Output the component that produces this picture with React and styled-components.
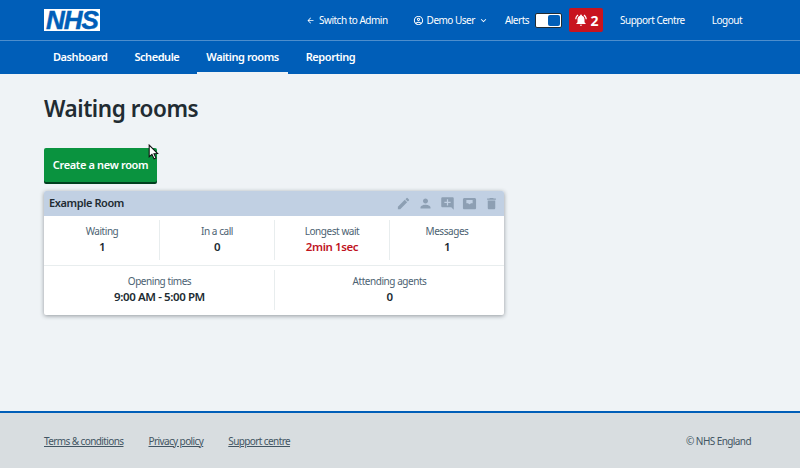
import React from 'react';
import styled, {createGlobalStyle} from 'styled-components';
import {
  MdArrowBack,
  MdOutlineAccountCircle,
  MdKeyboardArrowDown,
  MdNotificationsActive,
  MdEdit,
  MdPerson,
  MdAddComment,
  MdDelete
} from 'react-icons/md';

const GlobalStyle = createGlobalStyle`
  html, body {
    margin: 0;
    padding: 0;
    height: 100%;
    overflow: hidden;
  }
  body {
    font-family: 'Noto Sans', 'Open Sans', sans-serif;
    background: #eff3f6;
    color: #212b32;
  }
  #root {
    height: 100%;
  }
`;

const Page = styled.div`
  position: relative;
  display: flex;
  flex-direction: column;
  width: 800px;
  height: 468px;
`;

const Header = styled.header`
  background: #005eb8;
  color: #fff;
`;

const TopBar = styled.div`
  display: flex;
  align-items: center;
  justify-content: space-between;
  height: 40px;
  padding: 0 58px 0 44px;
  border-bottom: 1px solid #4d8ecd;
`;

const Logo = styled.div`
  display: flex;
  align-items: center;
  justify-content: center;
  width: 56px;
  height: 22px;
  background: #fff;
  color: #005eb8;
  font-family: 'Liberation Sans', sans-serif;
  font-size: 26px;
  font-weight: 700;
  font-style: italic;
  letter-spacing: -1px;
  line-height: 22px;
  -webkit-text-stroke: 0.5px #005eb8;
`;

const TopLinks = styled.div`
  display: flex;
  align-items: center;
`;

const TopLink = styled.span`
  display: flex;
  align-items: center;
  gap: ${props => props.$gap || 0}px;
  margin-left: ${props => props.$left || 0}px;
  font-size: 10px;
  letter-spacing: -0.5px;
  color: #fff;
`;

const Switch = styled.div`
  display: flex;
  justify-content: flex-end;
  width: 27px;
  height: 15px;
  margin-left: 6px;
  padding: 1px;
  box-sizing: border-box;
  background: #fff;
  border: 1px solid #212b32;
  border-radius: 2px;
`;

const SwitchKnob = styled.div`
  width: 12px;
  height: 11px;
  background: #005eb8;
  border-radius: 2px;
`;

const AlertBadge = styled.div`
  display: flex;
  align-items: center;
  justify-content: center;
  gap: 3px;
  width: 34px;
  height: 24px;
  margin-left: 7px;
  background: #c8141f;
  border-radius: 2px;
  font-size: 14px;
  font-weight: 700;
`;

const Nav = styled.nav`
  display: flex;
  height: 33px;
  padding-left: 44px;
`;

const NavItem = styled.div`
  display: flex;
  align-items: center;
  box-sizing: border-box;
  height: 33px;
  padding: 0 9px;
  margin-right: 9px;
  font-size: 11px;
  font-weight: 600;
  letter-spacing: -0.45px;
  border-bottom: 2px solid ${props => (props.$active ? '#eff3f6' : 'transparent')};
`;

const Main = styled.main`
  flex: 1;
  padding: 20px 44px 0;
`;

const Title = styled.h1`
  margin: 0;
  font-size: 22.5px;
  line-height: 30px;
  font-weight: 600;
  letter-spacing: -0.45px;
  color: #212b32;
`;

const CreateButton = styled.button`
  display: block;
  width: 113px;
  height: 34px;
  margin: 24px 0 9px;
  padding: 0 0 2px;
  border: none;
  border-radius: 2px;
  background: #0a933f;
  box-shadow: 0 2px 0 #00401e;
  color: #fff;
  font-family: inherit;
  font-size: 11px;
  font-weight: 600;
  letter-spacing: -0.35px;
`;

const Card = styled.section`
  width: 460px;
  background: #fff;
  border-radius: 2px;
  box-shadow: 0 1px 4px rgba(33, 43, 50, 0.45);
`;

const CardHeader = styled.div`
  display: flex;
  align-items: center;
  justify-content: space-between;
  height: 24px;
  padding: 0 5px 1px;
  background: #c1d0e3;
  border-radius: 2px 2px 0 0;
`;

const CardTitle = styled.span`
  font-size: 11px;
  line-height: 13px;
  padding-bottom: 2px;
  font-weight: 600;
  letter-spacing: -0.4px;
`;

const CardActions = styled.div`
  display: flex;
  align-items: center;
  gap: 7px;
  color: #8d9fb3;
  font-size: 15px;
`;

const StatRow = styled.div`
  display: flex;
  padding: 4px 0 5px;
  border-top: ${props => (props.$divider ? '1px solid #e8edee' : 'none')};
`;

const Stat = styled.div`
  flex: 1;
  box-sizing: border-box;
  height: 40px;
  padding-bottom: 2px;
  display: flex;
  flex-direction: column;
  align-items: center;
  justify-content: center;
  gap: 1px;
  border-left: 1px solid ${props => (props.$first ? 'transparent' : '#e8edee')};
`;

const StatLabel = styled.div`
  font-size: 10px;
  line-height: 14px;
  letter-spacing: -0.45px;
  color: #4c6272;
`;

const StatValue = styled.div`
  font-size: 11.5px;
  line-height: 15px;
  font-weight: 600;
  letter-spacing: -0.4px;
  color: ${props => props.$color || '#212b32'};
`;

const Footer = styled.footer`
  display: flex;
  align-items: center;
  justify-content: space-between;
  height: 55px;
  padding: 0 49px 0 44px;
  background: #d8dde0;
  border-top: 2px solid #005eb8;
`;

const FooterLinks = styled.div`
  display: flex;
  gap: 25px;
`;

const FooterLink = styled.span`
  font-size: 10px;
  letter-spacing: -0.6px;
  color: #425563;
  text-decoration: underline;
`;

const Copyright = styled.span`
  font-size: 10px;
  letter-spacing: -0.58px;
  color: #425563;
`;

const Cursor = styled.svg`
  position: absolute;
  left: 148px;
  top: 144px;
`;

const rooms = [
  {label: 'Waiting', value: '1'},
  {label: 'In a call', value: '0'},
  {label: 'Longest wait', value: '2min 1sec', color: '#c0141e'},
  {label: 'Messages', value: '1'}
];

const details = [
  {label: 'Opening times', value: '9:00 AM - 5:00 PM'},
  {label: 'Attending agents', value: '0'}
];

const navItems = ['Dashboard', 'Schedule', 'Waiting rooms', 'Reporting'];

const StatList = ({items, divider}) => (
  <StatRow $divider={divider}>
    {items.map((item, index) => (
      <Stat key={item.label} $first={index === 0}>
        <StatLabel>{item.label}</StatLabel>
        <StatValue $color={item.color}>{item.value}</StatValue>
      </Stat>
    ))}
  </StatRow>
);

// filled tray with a small window, the icon set has no close match
const InboxIcon = () => (
  <svg width="1em" height="1em" viewBox="0 0 24 24" fill="currentColor">
    <path
      fillRule="evenodd"
      d="M20 3H4C2.600 3 1.500 4.100 1.500 5.500V19c0 1.100.9 2 2 2h17c1.100 0 2-.9 2-2V5.500C22.500 4.100 21.400 3 20 3z M7 6.500h10v5h-3c-.3.9-1.100 1.500-2 1.500s-1.700-.6-2-1.500H7z"
    />
  </svg>
);

export default function App() {
  return (
    <Page>
      <GlobalStyle />
      <Header>
        <TopBar>
          <Logo>NHS</Logo>
          <TopLinks>
            <TopLink $gap={4}>
              <MdArrowBack size={9} />
              Switch to Admin
            </TopLink>
            <TopLink $gap={3} $left={25}>
              <MdOutlineAccountCircle size={11} />
              Demo User
              <MdKeyboardArrowDown size={11} />
            </TopLink>
            <TopLink $left={16}>Alerts</TopLink>
            <Switch>
              <SwitchKnob />
            </Switch>
            <AlertBadge>
              <MdNotificationsActive size={14} />2
            </AlertBadge>
            <TopLink $left={17}>Support Centre</TopLink>
            <TopLink $left={27}>Logout</TopLink>
          </TopLinks>
        </TopBar>
        <Nav>
          {navItems.map(item => (
            <NavItem key={item} $active={item === 'Waiting rooms'}>
              {item}
            </NavItem>
          ))}
        </Nav>
      </Header>
      <Main>
        <Title>Waiting rooms</Title>
        <CreateButton>Create a new room</CreateButton>
        <Card>
          <CardHeader>
            <CardTitle>Example Room</CardTitle>
            <CardActions>
              <MdEdit />
              <MdPerson />
              <MdAddComment />
              <InboxIcon />
              <MdDelete />
            </CardActions>
          </CardHeader>
          <StatList items={rooms} />
          <StatList items={details} divider />
        </Card>
      </Main>
      <Footer>
        <FooterLinks>
          <FooterLink>Terms &amp; conditions</FooterLink>
          <FooterLink>Privacy policy</FooterLink>
          <FooterLink>Support centre</FooterLink>
        </FooterLinks>
        <Copyright>© NHS England</Copyright>
      </Footer>
      <Cursor width="13" height="17" viewBox="0 0 12 16">
        <path d="M1 1 L1 12 L3.6 9.8 L5.6 14 L7.4 13.2 L5.5 9.2 L9 9 Z" fill="#fff" stroke="#111" strokeWidth="1" />
      </Cursor>
    </Page>
  );
}
